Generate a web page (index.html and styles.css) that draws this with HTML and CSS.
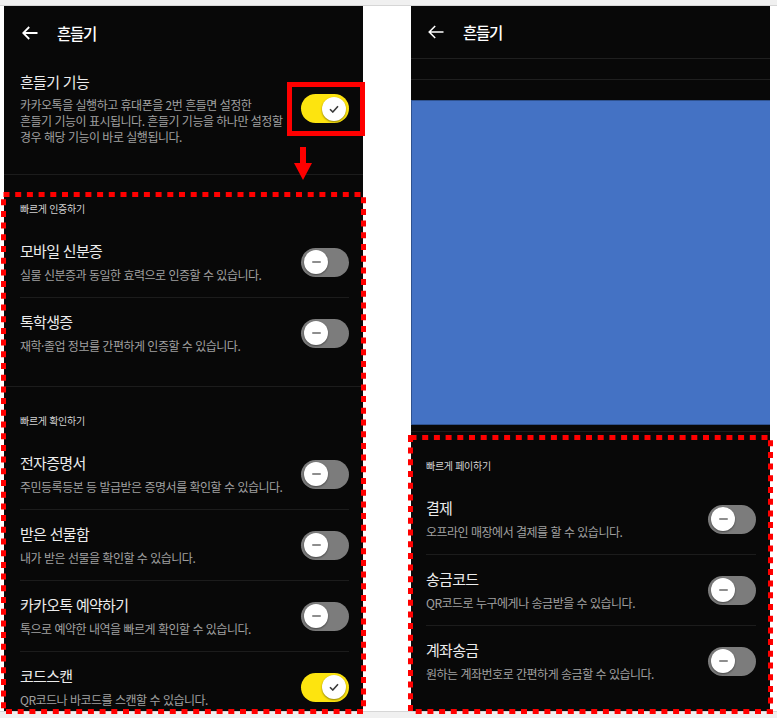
FILE: index.html
```html
<!DOCTYPE html>
<html lang="ko">
<head>
<meta charset="utf-8">
<title>흔들기</title>
<link rel="stylesheet" href="styles.css">
</head>
<body>
<div class="topbar"></div>
<div class="stage">
  <div class="panel panel-left">
    <div class="screen">
      <header class="appbar">
        <svg class="back" width="16" height="14" viewBox="0 0 16 14"><path d="M15.5 7H1.2M7.2 1 1.2 7l6 6" fill="none" stroke="#fff" stroke-width="1.8"/></svg>
        <span class="appbar-title">흔들기</span>
      </header>
      <div class="shake">
        <div class="text">
          <div class="title">흔들기 기능</div>
          <div class="desc desc-multi">카카오톡을 실행하고 휴대폰을 2번 흔들면 설정한<br>흔들기 기능이 표시됩니다. 흔들기 기능을 하나만 설정할<br>경우 해당 기능이 바로 실행됩니다.</div>
        </div>
        <div class="toggle on"><span class="knob"><svg width="10" height="8" viewBox="0 0 10 8"><path d="M1 4.2 3.8 7 9 1.2" fill="none" stroke="#3a3a3a" stroke-width="1.6"/></svg></span></div>
      </div>
      <section class="section">
        <div class="label">빠르게 인증하기</div>
        <div class="group">
          <div class="item"><div class="text"><div class="title">모바일 신분증</div><div class="desc">실물 신분증과 동일한 효력으로 인증할 수 있습니다.</div></div><div class="toggle"><span class="knob"><i class="dash"></i></span></div></div>
          <div class="item"><div class="text"><div class="title">톡학생증</div><div class="desc">재학·졸업 정보를 간편하게 인증할 수 있습니다.</div></div><div class="toggle"><span class="knob"><i class="dash"></i></span></div></div>
        </div>
      </section>
      <section class="section">
        <div class="label">빠르게 확인하기</div>
        <div class="group">
          <div class="item"><div class="text"><div class="title">전자증명서</div><div class="desc">주민등록등본 등 발급받은 증명서를 확인할 수 있습니다.</div></div><div class="toggle"><span class="knob"><i class="dash"></i></span></div></div>
          <div class="item"><div class="text"><div class="title">받은 선물함</div><div class="desc">내가 받은 선물을 확인할 수 있습니다.</div></div><div class="toggle"><span class="knob"><i class="dash"></i></span></div></div>
          <div class="item"><div class="text"><div class="title">카카오톡 예약하기</div><div class="desc">톡으로 예약한 내역을 빠르게 확인할 수 있습니다.</div></div><div class="toggle"><span class="knob"><i class="dash"></i></span></div></div>
          <div class="item"><div class="text"><div class="title">코드스캔</div><div class="desc">QR코드나 바코드를 스캔할 수 있습니다.</div></div><div class="toggle on"><span class="knob"><svg width="10" height="8" viewBox="0 0 10 8"><path d="M1 4.2 3.8 7 9 1.2" fill="none" stroke="#3a3a3a" stroke-width="1.6"/></svg></span></div></div>
        </div>
      </section>
    </div>
    <div class="redbox"></div>
    <svg class="arrow" width="18" height="33" viewBox="0 0 18 33"><path d="M6 0h6v16h6L9 33 0 16h6z" fill="#ff0000"/></svg>
    <svg class="dots dots-left" width="365" height="522" viewBox="0 0 365 522"><rect x="2.5" y="2.5" width="360" height="517"/></svg>
  </div>

  <div class="panel panel-right">
    <div class="screen">
      <header class="appbar appbar-right">
        <svg class="back" width="16" height="14" viewBox="0 0 16 14"><path d="M15.5 7H1.2M7.2 1 1.2 7l6 6" fill="none" stroke="#fff" stroke-width="1.5"/></svg>
        <span class="appbar-title">흔들기</span>
      </header>
      <div class="rule"></div>
      <div class="rule"></div>
      <div class="cover"></div>
      <div class="gap"></div>
      <section class="section section-pay">
        <div class="label">빠르게 페이하기</div>
        <div class="group">
          <div class="item"><div class="text"><div class="title">결제</div><div class="desc">오프라인 매장에서 결제를 할 수 있습니다.</div></div><div class="toggle"><span class="knob"><i class="dash"></i></span></div></div>
          <div class="item"><div class="text"><div class="title">송금코드</div><div class="desc">QR코드로 누구에게나 송금받을 수 있습니다.</div></div><div class="toggle"><span class="knob"><i class="dash"></i></span></div></div>
          <div class="item"><div class="text"><div class="title">계좌송금</div><div class="desc">원하는 계좌번호로 간편하게 송금할 수 있습니다.</div></div><div class="toggle"><span class="knob"><i class="dash"></i></span></div></div>
        </div>
      </section>
    </div>
    <svg class="dots dots-right" width="365" height="279" viewBox="0 0 365 279"><rect x="2.5" y="2.5" width="360" height="274"/></svg>
  </div>
</div>
<div class="bottombar"></div>
</body>
</html>
```
FILE: styles.css
```css
* { box-sizing: border-box; }
html, body { margin: 0; padding: 0; }
body {
  width: 777px;
  height: 718px;
  overflow: hidden;
  background: #ffffff;
  font-family: "Noto Sans CJK KR", "Noto Sans", sans-serif;
}
.topbar {
  height: 6px;
  background: #f0f0f0;
  border-bottom: 1px solid #d6d6d6;
}
.bottombar {
  height: 7px;
  background: #f0f0f0;
  border-top: 1px solid #d6d6d6;
}
.stage {
  display: flex;
  height: 705px;
}
.panel {
  position: relative;
  width: 359px;
  height: 705px;
  background: #080808;
}
.panel-left { margin-left: 4px; }
.panel-right { margin-left: 48px; }
.screen {
  height: 100%;
  overflow: hidden;
}
.appbar {
  height: 54px;
  display: flex;
  align-items: center;
  padding-left: 18px;
  gap: 19px;
}
.appbar-right { height: 52px; padding-left: 17px; }
.back { flex: none; display: block; }
.appbar-title {
  color: #ffffff;
  font-size: 15.5px;
  font-weight: 500;
  letter-spacing: -1.2px;
  line-height: 20px;
}
.text { min-width: 0; }
.title {
  color: #ececec;
  font-size: 15px;
  letter-spacing: -0.7px;
  line-height: 20px;
  white-space: nowrap;
}
.desc {
  color: #a0a0a0;
  font-size: 12px;
  letter-spacing: -0.5px;
  line-height: 16px;
  margin-top: 6px;
  white-space: nowrap;
}
.desc-multi { margin-top: 5px; }
.shake {
  display: flex;
  align-items: center;
  justify-content: space-between;
  padding: 12px 14px 29px 16px;
  border-bottom: 1px solid #1c1c1c;
}
.section {
  padding-top: 27px;
  padding-bottom: 18px;
  border-bottom: 1px solid #1c1c1c;
}
.label {
  color: #d2d2d2;
  font-size: 10px;
  letter-spacing: -0.3px;
  line-height: 14px;
  padding-left: 16px;
  margin-bottom: 11px;
}
.group { padding: 0 14px 0 16px; }
.section-pay {
  border-bottom: none;
  border-top: 1px solid #1c1c1c;
}
.section-pay .group { padding: 0 14px 0 15px; }
.section-pay .label { padding-left: 15px; }
.item {
  display: flex;
  align-items: center;
  justify-content: space-between;
  padding: 14px 0;
  border-bottom: 1px solid #1c1c1c;
}
.item:last-child { border-bottom: none; }
.toggle {
  flex: none;
  width: 48px;
  height: 29px;
  border-radius: 15px;
  background: #7c7c7c;
  display: flex;
  align-items: center;
  justify-content: flex-start;
  padding: 0 3px;
}
.toggle.on {
  background: #fde40f;
  justify-content: flex-end;
}
.knob {
  width: 24px;
  height: 24px;
  border-radius: 50%;
  background: #ffffff;
  box-shadow: 0 1px 2px rgba(0, 0, 0, 0.45);
  display: flex;
  align-items: center;
  justify-content: center;
}
.knob svg { display: block; }
.dash {
  display: block;
  width: 9px;
  height: 2px;
  border-radius: 1px;
  background: #8e8e8e;
}
.rule {
  height: 21px;
  border-top: 1px solid #1f1f1f;
}
.cover {
  height: 325px;
  width: 360px;
  background: #4472c4;
  border: 1px solid #2f528f;
}
.gap { height: 6px; }

/* annotations drawn over the screenshot */
.redbox {
  position: absolute;
  left: 283px;
  top: 76px;
  width: 78px;
  height: 54px;
  border: 5px solid #ff0000;
}
.arrow {
  position: absolute;
  left: 290px;
  top: 141px;
}
.dots {
  position: absolute;
  left: -3px;
  overflow: visible;
}
.dots rect {
  fill: none;
  stroke: #ff0000;
  stroke-width: 5;
  stroke-dasharray: 6 5.7;
}
.dots-left { top: 186px; }
.dots-right { top: 429px; }
```
